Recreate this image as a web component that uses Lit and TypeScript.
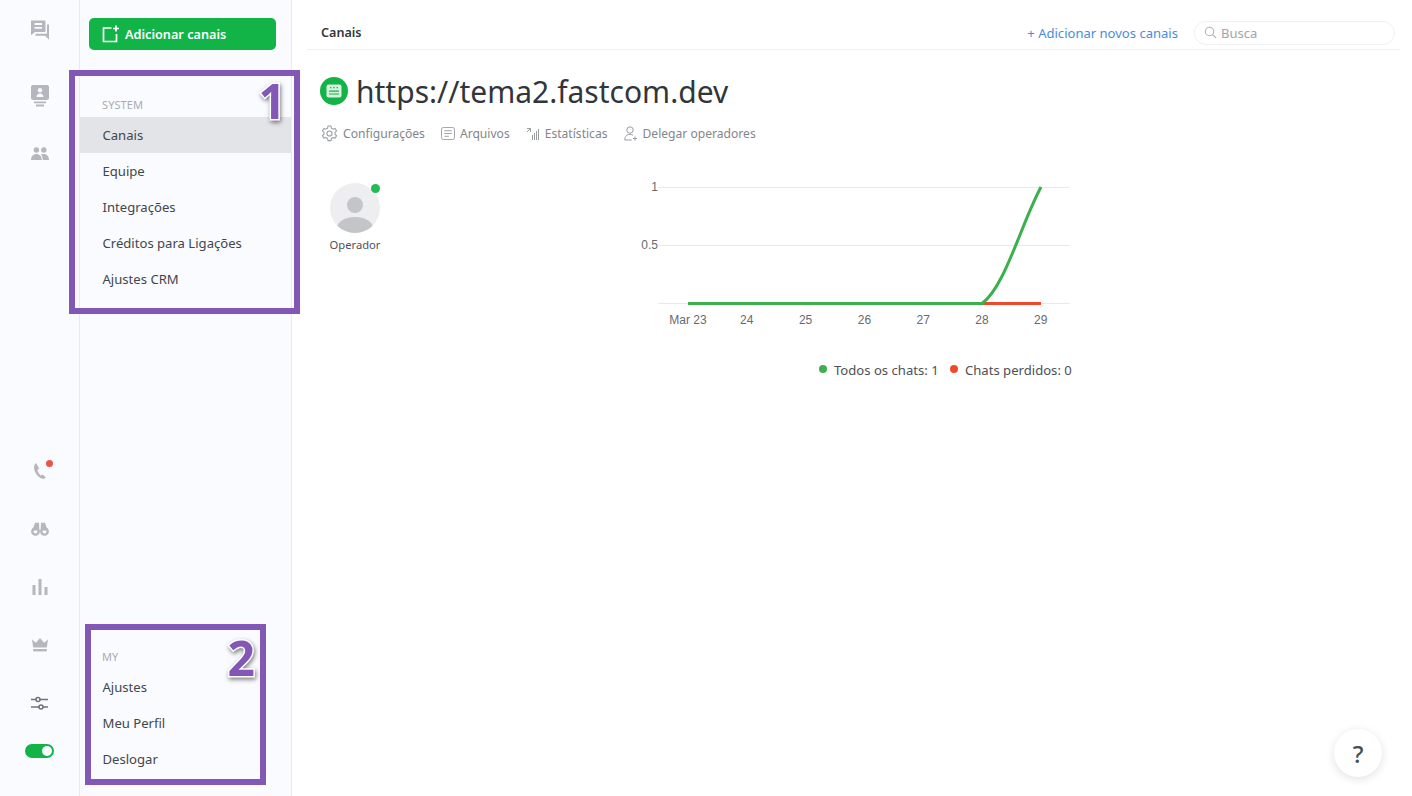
import { LitElement, html, css, svg } from "lit";
import { customElement } from "lit/decorators.js";

const gray = "#b4b7bd";

@customElement("app-root")
export class AppRoot extends LitElement {
  static styles = css`
    :host { display: block; width: 1412px; height: 796px; position: relative; overflow: hidden; background: #fff;
      font-family: "Noto Sans", "Open Sans", sans-serif; color: #3c4046; }
    * { box-sizing: border-box; }
    .page { display: flex; height: 796px; }
    .rail { width: 80px; flex: none; background: #fafbfe; border-right: 1px solid #e8eaee; display: flex; flex-direction: column; justify-content: space-between; align-items: center; padding: 15px 0 31px; }
    .rail-group { display: flex; flex-direction: column; align-items: center; }
    .ri { width: 28px; height: 28px; display: flex; align-items: center; justify-content: center; position: relative; }
    .ri svg { display: block; }
    .top .ri:nth-child(2) { margin-top: 39px; }
    .top .ri:nth-child(3) { margin-top: 30px; }
    .bottom .ri { margin-top: 30px; }
    .bottom .ri:first-child { margin-top: 0; }
    .bottom .ri.toggle-wrap { margin-top: 20px; height: 28px; }
    .dot { position: absolute; width: 7px; height: 7px; border-radius: 50%; background: #f0524a; top: 3px; right: 1px; }
    .toggle { width: 29px; height: 14px; border-radius: 7px; background: #12b347; position: relative; display: block; flex: none; }
    .toggle::after { content: ""; position: absolute; width: 10px; height: 10px; border-radius: 50%; background: #fff; right: 2px; top: 2px; }
    .side { width: 212px; flex: none; background: #fafbfe; border-right: 1px solid #e8eaee; display: flex; flex-direction: column; justify-content: space-between; padding-top: 18px; padding-bottom: 19px; }
    .add { margin: 0 15px 0 9px; height: 32px; background: #12b347; border-radius: 5px; color: #fff; font-size: 12.7px; font-weight: 600; display: flex; align-items: center; gap: 5px; padding-left: 13px; }
    .label { font-size: 11px; color: #a9acb2; line-height: 16px; padding-left: 22px; letter-spacing: .1px; }
    .sys { margin-top: 47px; }
    .sys .label { margin-bottom: 4px; }
    .item { height: 36px; display: flex; align-items: center; padding-left: 22.5px; font-size: 13.1px; color: #42464c; }
    .item.on { background: #e2e4e8; }
    .my .label { margin-bottom: 4px; }
    .main { flex: 1; padding: 0 12px 0 15px; min-width: 0; }
    .head { height: 50px; border-bottom: 1px solid #eff0f2; display: flex; align-items: center; padding: 16px 5px 0 14px; }
    .head b { font-size: 12.6px; font-weight: 600; color: #33373c; flex: 1; }
    .link { color: #4a8bdc; font-size: 13.05px; margin-right: 16px; }
    .search { width: 201px; height: 24px; border: 1px solid #eef0f3; border-radius: 12px; display: flex; align-items: center; gap: 4px; padding-left: 9px; color: #a2a5ab; font-size: 13px; }
    .title { display: flex; align-items: center; gap: 8px; margin: 17px 0 0 13px; height: 48px; font-size: 30px; color: #32363b; }
    .badge { width: 28px; height: 28px; border-radius: 50%; background: #12b347; display: flex; align-items: center; justify-content: center; flex: none; }
    .tabs { display: flex; margin: 6px 0 0 14px; height: 24px; align-items: center; font-size: 12.1px; color: #82868c; }
    .tab { display: flex; align-items: center; gap: 5px; margin-right: 16px; }
    .content { display: flex; margin: 38px 0 0 23px; }
    .op { width: 50px; display: flex; flex-direction: column; align-items: center; position: relative; flex: none; }
    .ava { width: 50px; height: 50px; border-radius: 50%; background: #eeeef0; overflow: hidden; display: block; }
    .on-dot { position: absolute; top: 1px; right: 0; width: 9px; height: 9px; border-radius: 50%; background: #22bb55; }
    .op span { font-size: 11.2px; margin-top: 4px; color: #4e5258; white-space: nowrap; }
    .chart { margin: -4px 0 0 220px; display: block; flex: none; }
    .chart text.ax { font-family: "Liberation Sans", sans-serif; font-size: 12px; fill: #666b72; }
    .chart text.lg { font-family: "Noto Sans", sans-serif; font-size: 13.1px; fill: #4c5056; }
    .help { position: absolute; right: 30px; bottom: 19px; width: 48px; height: 48px; border-radius: 50%; background: #fff; box-shadow: 0 2px 10px rgba(0,0,0,.12); display: flex; align-items: center; justify-content: center; font-size: 24px; font-weight: 500; font-family: "Noto Sans", sans-serif; color: #4a4d52; }
    .note { position: absolute; border: 6px solid #8257b5; pointer-events: none; }
    .n1 { left: 69px; top: 70px; width: 231px; height: 244px; }
    .n2 { left: 85px; top: 624px; width: 181px; height: 161px; }
    .num { position: absolute; font-family: "Noto Sans", sans-serif; font-weight: 700; font-size: 48px; line-height: 48px; color: #8257b5; -webkit-text-stroke: 3px #fff; paint-order: stroke fill; filter: drop-shadow(1px 2px 2px rgba(0,0,0,.5)); }
    .n1 .num { right: 8px; top: 1px; }
    .n2 .num { right: 5px; top: 4px; }
  `;

  private railTop() {
    return html`
      <div class="ri"><svg width="22" height="22" viewBox="0 0 22 22" fill="none"><path d="M2 2.5h13.5a1 1 0 0 1 1 1V13a1 1 0 0 1-1 1H6l-4 3.2z" fill="${gray}"/><path d="M5.5 6h7.5M5.5 9.8h7.5" stroke="#fafbfe" stroke-width="1.8"/><path d="M18 6.5h2v15l-4-3.8H6.5v-2H18z" fill="${gray}"/></svg></div>
      <div class="ri"><svg width="20" height="24" viewBox="0 0 20 24"><rect x="1" y="1" width="18" height="15" rx="2" fill="${gray}"/><circle cx="10" cy="6.2" r="2.2" fill="#fafbfe"/><path d="M6.5 13c0-2.4 1.6-3.6 3.5-3.6s3.5 1.2 3.5 3.6z" fill="#fafbfe"/><path d="M4 18.4h12M6 21.5h8" stroke="${gray}" stroke-width="1.8"/></svg></div>
      <div class="ri"><svg width="18" height="14" viewBox="0 0 18 14" fill="${gray}"><circle cx="5.4" cy="3" r="2.7"/><circle cx="12.8" cy="3" r="2.7"/><path d="M0 13c0-3.6 2.4-6 5.4-6s5.4 2.4 5.4 6z"/><path d="M11.8 13c0-2.4-.6-4.2-1.8-5.6.8-.3 1.7-.4 2.8-.4 3 0 5.2 2.4 5.2 6z"/></svg></div>`;
  }

  private railBottom() {
    return html`
      <div class="ri"><svg width="16" height="18" viewBox="0 0 16 18" fill="none"><path d="M4 1C2 2.6 1.4 5.5 2.6 8.7c1.3 3.4 3.8 6.4 6.8 7.7 1.8.7 3.3.3 4.4-1l-3-3-2 1.2C7 12.2 5.8 10 5.4 7.8l1.8-1.4z" fill="${gray}"/></svg><i class="dot"></i></div>
      <div class="ri"><svg width="18" height="14" viewBox="0 0 18 14" fill="none"><path d="M1.5 8.5L4 .8h4l.4 7.7zM16.5 8.5L14 .8h-4l-.4 7.7z" fill="${gray}"/><circle cx="4.5" cy="9.4" r="3.2" stroke="${gray}" stroke-width="2.4"/><circle cx="13.5" cy="9.4" r="3.2" stroke="${gray}" stroke-width="2.4"/></svg></div>
      <div class="ri"><svg width="16" height="16" viewBox="0 0 16 16" fill="${gray}"><rect x="0.5" y="6" width="3" height="10"/><rect x="6.5" y="0" width="3" height="16"/><rect x="12.5" y="8" width="3" height="8"/></svg></div>
      <div class="ri"><svg width="16" height="14" viewBox="0 0 16 14" fill="${gray}"><path d="M0 1.5l4 3.2L8 0l4 4.7 4-3.2-1.2 8H1.2z"/><rect x="1.2" y="11" width="13.6" height="2.4"/></svg></div>
      <div class="ri"><svg width="17" height="15" viewBox="0 0 17 15" fill="none" stroke="#6f7480" stroke-width="1.6"><path d="M0 3.5h5M9 3.5h8M0 11h8M12 11h5"/><circle cx="7" cy="3.5" r="2"/><circle cx="10" cy="11" r="2"/></svg></div>
      <div class="ri toggle-wrap"><i class="toggle"></i></div>`;
  }

  private chart() {
    const xs = [0, 1, 2, 3, 4, 5, 6].map((i) => 88 + i * 58.8);
    const labels = ["Mar 23", "24", "25", "26", "27", "28", "29"];
    return svg`<svg class="chart" width="500" height="220" viewBox="0 0 500 220" fill="none">
      ${[8, 66, 124].map((y) => svg`<line x1="58" x2="470" y1=${y + 0.5} y2=${y + 0.5} stroke="#e8e9ec"/>`)}
      <text class="ax" x="58" y="12" text-anchor="end">1</text>
      <text class="ax" x="58" y="69.5" text-anchor="end">0.5</text>
      ${xs.map((x, i) => svg`<text class="ax" x=${x} y="144.5" text-anchor="middle">${labels[i]}</text>`)}
      <path d="M382 124.5H441" stroke="#f0482a" stroke-width="2.8"/>
      <path d="M88 124.5H382C405 108 421 45 441 8" stroke="#3cb04e" stroke-width="3"/>
      <circle cx="223" cy="190" r="4" fill="#3cb04e"/>
      <text class="lg" x="234" y="196">Todos os chats: 1</text>
      <circle cx="354" cy="190" r="4" fill="#f0482a"/>
      <text class="lg" x="365" y="196">Chats perdidos: 0</text>
    </svg>`;
  }

  render() {
    const ig = "#9a9da3";
    return html`
      <div class="page">
        <nav class="rail">
          <div class="rail-group top">${this.railTop()}</div>
          <div class="rail-group bottom">${this.railBottom()}</div>
        </nav>
        <aside class="side">
          <div>
            <div class="add">
              <svg width="18" height="18" viewBox="0 0 18 18" fill="none" stroke="#fff" stroke-width="1.7"><path d="M9.5 3H1.5v13.5h13V9"/><path d="M14 .5v6M11 3.5h6"/></svg>
              Adicionar canais
            </div>
            <div class="sys">
              <div class="label">SYSTEM</div>
              <div class="item on">Canais</div>
              <div class="item">Equipe</div>
              <div class="item">Integrações</div>
              <div class="item">Créditos para Ligações</div>
              <div class="item">Ajustes CRM</div>
            </div>
          </div>
          <div class="my">
            <div class="label">MY</div>
            <div class="item">Ajustes</div>
            <div class="item">Meu Perfil</div>
            <div class="item">Deslogar</div>
          </div>
        </aside>
        <main class="main">
          <header class="head">
            <b>Canais</b>
            <span class="link">+ Adicionar novos canais</span>
            <div class="search">
              <svg width="13" height="13" viewBox="0 0 13 13" fill="none" stroke="#aeb1b6" stroke-width="1.1"><circle cx="5.5" cy="5.5" r="4.2"/><path d="M8.6 8.6l3.6 3.6"/></svg>
              Busca
            </div>
          </header>
          <div class="title">
            <span class="badge"><svg width="16" height="14" viewBox="0 0 16 14"><rect x="0.5" y="0.5" width="15" height="13" rx="2" fill="#d8f2df"/><path d="M3 7.2h10M3 10h10" stroke="#12b347" stroke-width="1.2"/><path d="M4 3.6h1.4M7.3 3.6h1.4M10.6 3.6H12" stroke="#12b347" stroke-width="1.4"/></svg></span>
            https://tema2.fastcom.dev
          </div>
          <div class="tabs">
            <span class="tab"><svg width="17" height="17" viewBox="0 0 16 16" fill="none" stroke="${ig}" stroke-width="1"><circle cx="8" cy="8" r="2.4"/><path d="M6.6 1h2.8l.4 2 1.6.9 1.9-.7 1.4 2.4-1.5 1.3v1.9l1.5 1.3-1.4 2.4-1.9-.7-1.6.9-.4 2H6.6l-.4-2-1.6-.9-1.9.7L1.3 10l1.5-1.3V6.9L1.3 5.6l1.4-2.4 1.9.7 1.6-.9z" stroke-linejoin="round"/></svg>Configurações</span>
            <span class="tab"><svg width="14" height="13" viewBox="0 0 15 14" fill="none" stroke="${ig}" stroke-width="1"><rect x="0.5" y="0.5" width="14" height="13" rx="2"/><path d="M3.5 4h8M3.5 7h8M3.5 10h5"/></svg>Arquivos</span>
            <span class="tab"><svg width="14" height="13" viewBox="0 0 14 13" fill="none" stroke="${ig}" stroke-width="1"><path d="M1 1.5h3.5V5M4.5 1.5L1 5M6.5 13V8M8.5 13V6M10.5 13V4M12.5 13V2"/></svg>Estatísticas</span>
            <span class="tab"><svg width="14" height="15" viewBox="0 0 14 15" fill="none" stroke="${ig}" stroke-width="1"><circle cx="6" cy="4" r="3.2"/><path d="M.8 14c0-4 2.2-5.6 5.2-5.6 1.2 0 2.2.3 3 .8M.8 14h7M11 10.5v4M9 12.5h4"/></svg>Delegar operadores</span>
          </div>
          <section class="content">
            <div class="op">
              <svg class="ava" viewBox="0 0 50 50"><circle cx="25" cy="22" r="8" fill="#c4c5c8"/><ellipse cx="25" cy="45" rx="18" ry="11" fill="#c4c5c8"/></svg>
              <i class="on-dot"></i>
              <span>Operador</span>
            </div>
            ${this.chart()}
          </section>
        </main>
      </div>
      <div class="help">?</div>
      <div class="note n1"><span class="num">1</span></div>
      <div class="note n2"><span class="num">2</span></div>
    `;
  }
}
